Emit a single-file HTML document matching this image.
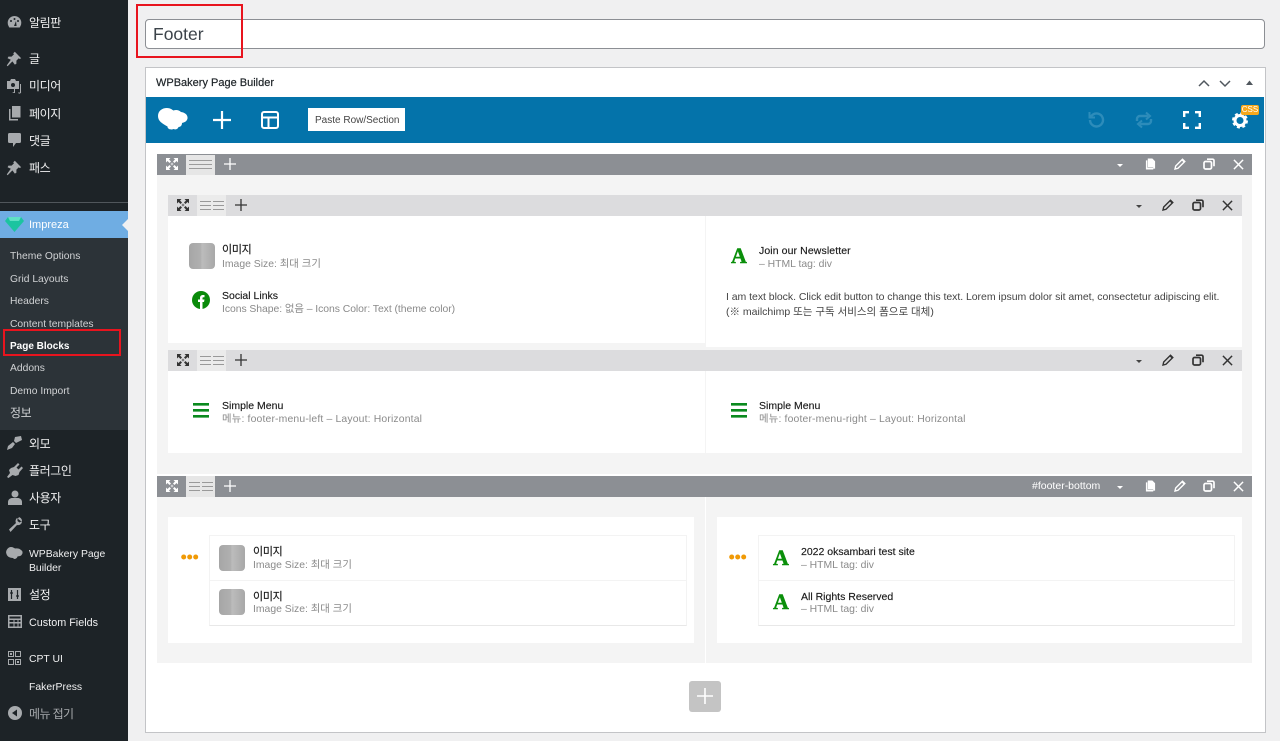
<!DOCTYPE html>
<html lang="ko"><head><meta charset="utf-8"><title>Footer</title>
<style>
html,body{margin:0;padding:0;width:1280px;height:741px;overflow:hidden;background:#f0f0f1}
body{position:relative;font-family:"Liberation Sans","Noto Sans CJK KR",sans-serif;font-size:11px;color:#23282d}
.a{position:absolute}
.t{position:absolute;white-space:nowrap;line-height:14px;margin-top:1px}
.m{color:#f0f0f1;font-size:11.5px}
.k{font-size:12px;letter-spacing:-.4px}
.s{color:#d0d2d4;font-size:10.3px;margin-top:2px}
.s.k{margin-top:1px}
.h{color:#1a1a1a;font-size:10.5px;-webkit-text-stroke:.15px #1a1a1a}
.g{color:#8a8a8a;font-size:10.4px;margin-top:2px}
svg{position:absolute;overflow:visible}
.img{position:absolute;width:26px;height:26px;border-radius:4px;background:linear-gradient(90deg,#a6a6a6,#b0b0b0 45%,#bcbcbc 50%,#a8a8a8)}
.A{position:absolute;font:bold 22px/26px "Liberation Serif",serif;color:#0a8f0a;-webkit-text-stroke:.5px #0a8f0a;width:24px;text-align:center}
</style></head><body>
<svg width="0" height="0" style="position:absolute">
<defs>
<symbol id="pin" viewBox="0 0 20 20"><path d="M11 1l8 8-2 1-1-1-3 3 0 4-2 1-3-4-6 6-1-1 5-7-4-2 1-2 4 0 3-3-1-1z" fill="#a7aaad"/></symbol>
<symbol id="exp" viewBox="0 0 12 12"><path d="M0 0h4.500L3 1.500 5 3.500 3.500 5 1.500 3 0 4.500zM12 0v4.500L10.500 3 8.500 5 7 3.500 9 1.500 7.500 0zM0 12V7.500L1.500 9l2-2L5 8.500l-2 2L4.500 12zM12 12H7.500L9 10.500l-2-2L8.500 7l2 2L12 7.500z" fill="currentColor"/><rect x="4.800" y="4.800" width="2.400" height="2.400" fill="currentColor" opacity=".55"/></symbol>
<symbol id="pen" viewBox="0 0 12 12"><path d="M1 11l.7-3L8.500 1.200 10.800 3.500 4 10.300z" fill="none" stroke="currentColor" stroke-width="1.400"/><path d="M7.500 2.200L10 4.700 11 3.500 8.700 1z" fill="currentColor"/></symbol>
<symbol id="clone" viewBox="0 0 12 12"><rect x="1" y="3.500" width="7.500" height="7.500" rx="1.500" fill="none" stroke="currentColor" stroke-width="1.700"/><path d="M4 1.200h5.500a1.500 1.500 0 0 1 1.500 1.500v5.500" fill="none" stroke="currentColor" stroke-width="1.700"/></symbol>
<symbol id="x" viewBox="0 0 12 12"><path d="M1 1l10 10M11 1L1 11" stroke="currentColor" stroke-width="1.600" fill="none"/></symbol>
<symbol id="plus" viewBox="0 0 12 12"><path d="M6 0v12M0 6h12" stroke="currentColor" stroke-width="1.300" fill="none"/></symbol>
<symbol id="copy" viewBox="0 0 12 12"><path d="M3 0h5l3 3v8H9v1H1V2h2z" fill="currentColor"/><path d="M3 2v8h6" fill="none" stroke="#8c8f94" stroke-width=".5"/></symbol>
<symbol id="ham" viewBox="0 0 16 15"><path d="M0 0h16v2.600H0zM0 6h16v2.600H0zM0 12h16v2.600H0z" fill="#0a8a1e"/></symbol>
</defs></svg>

<!-- Sidebar -->
<div class="a" style="left:0;top:0;width:128px;height:741px;background:#1d2327"></div>
<div class="a" style="left:0;top:202px;width:128px;height:1px;background:#50565b"></div>
<div class="a" style="left:0;top:211px;width:128px;height:27px;background:#6fade3"></div>
<div class="a" style="left:0;top:238px;width:128px;height:192px;background:#2c3338"></div>
<div class="a" style="left:122px;top:219px;width:0;height:0;border:6px solid transparent;border-left:0;border-right:6px solid #f0f0f1"></div>

<svg style="left:7px;top:15px" width="15" height="15" viewBox="0 0 15 15"><path d="M7.500 1a6.800 6.800 0 0 0-6 10l.8 1.500h10.400l.8-1.500a6.800 6.800 0 0 0-6-10z" fill="#a7aaad"/><circle cx="4" cy="6" r="1" fill="#1d2327"/><circle cx="7.500" cy="4" r="1" fill="#1d2327"/><circle cx="11" cy="6" r="1" fill="#1d2327"/><path d="M7 11l2-5 .6 5z" fill="#1d2327"/></svg>
<svg style="left:6px;top:51px" width="16" height="16"><use href="#pin"/></svg>
<svg style="left:6px;top:78px" width="17" height="16" viewBox="0 0 17 16"><path d="M1 3h3l1-2h4l1 2h3v8H1z" fill="#a7aaad"/><circle cx="7" cy="7" r="2" fill="#1d2327"/><path d="M15 6v7.500a1.500 1.500 0 0 1-3 1h2V6zM8 11v3l-2 1h3v-4z" fill="#a7aaad"/></svg>
<svg style="left:8px;top:106px" width="13" height="15" viewBox="0 0 13 15"><path d="M4 0h8.500v11.500H4z" fill="#a7aaad"/><path d="M1 3h1.500v10H10v1.500H1z" fill="#a7aaad"/></svg>
<svg style="left:8px;top:133px" width="13" height="14" viewBox="0 0 13 14"><path d="M1.500 0h10A1.500 1.500 0 0 1 13 1.500v7A1.500 1.500 0 0 1 11.500 10H8l-3 4v-4H1.500A1.500 1.500 0 0 1 0 8.500v-7A1.500 1.500 0 0 1 1.500 0z" fill="#a7aaad"/></svg>
<svg style="left:6px;top:160px" width="16" height="16"><use href="#pin"/></svg>
<svg style="left:5px;top:217px" width="19" height="15" viewBox="0 0 19 15"><path d="M3 0h13l3 4-9.500 11L0 4z" fill="#1cc4a0"/><path d="M3 0h13l-2 4H5z" fill="#5fe0c4"/></svg>
<svg style="left:6px;top:436px" width="17" height="15" viewBox="0 0 17 15"><path d="M9 1l6-1 1 4-6 3-2-2zM7 6l2 2-3 4-5 2 1-4z" fill="#a7aaad"/></svg>
<svg style="left:7px;top:463px" width="16" height="16" viewBox="0 0 16 16"><path d="M11 0l1.500 1.500-3 3 2 2 3-3L16 5l-3.500 4-1 3-3 1-3-1-4 3L0 14l3-4-1-3 2-2 3-1z" fill="#a7aaad"/></svg>
<svg style="left:8px;top:490px" width="14" height="15" viewBox="0 0 14 15"><circle cx="7" cy="4" r="3.500" fill="#a7aaad"/><path d="M0 15v-3c0-3 3-4 4-4h6c1 0 4 1 4 4v3z" fill="#a7aaad"/></svg>
<svg style="left:8px;top:517px" width="14" height="15" viewBox="0 0 14 15"><path d="M10 0a4 4 0 0 1 4 4l-2.500 1.500-2-1.500V2l1.500-1.500zM9 1a4 4 0 0 0-1 5L1 12.500 2.500 15 9 8a4 4 0 0 0 5-3z" fill="#a7aaad"/></svg>
<svg style="left:6px;top:547px" width="17" height="13" viewBox="0 0 17 13"><path d="M5 0c2 0 3 1 4 1.500C11 1 14 1.500 15 3c2 1 2 3.500.5 5-1 1.500-3 1-4 1.500-.5 2-3 3.500-4.500 1.500C4 11 1 9.500.5 7-1 4 2 0 5 0z" fill="#a7aaad"/></svg>
<svg style="left:8px;top:588px" width="13" height="13" viewBox="0 0 13 13"><rect width="13" height="13" fill="#a7aaad"/><path d="M3.500 2v9M9.500 2v9M2 5h3M8 8h3" stroke="#1d2327" stroke-width="1.200"/></svg>
<svg style="left:8px;top:615px" width="14" height="13" viewBox="0 0 14 13"><rect width="14" height="13" fill="#a7aaad"/><path d="M1.500 1.500h11v2h-11zM1.500 5h4v2h-4zM6.500 5h3v2h-3zM10.500 5h2v2h-2zM1.500 8.500h4v3h-4zM6.500 8.500h3v3h-3zM10.500 8.500h2v3h-2z" fill="#1d2327"/></svg>
<svg style="left:8px;top:651px" width="13" height="14" viewBox="0 0 13 14"><path d="M0 0h6v6H0zM7 0h6v6H7zM0 8h6v6H0zM7 8h6v6H7z" fill="#a7aaad"/><path d="M1 1h4v4H1zM8 1h4v4H8zM1 9h4v4H1zM8 9h4v4H8z" fill="#1d2327"/><path d="M2 2h2v2H2zM9 10h2v2H9z" fill="#a7aaad"/></svg>
<svg style="left:8px;top:706px" width="14" height="14" viewBox="0 0 14 14"><circle cx="7" cy="7" r="7" fill="#a7aaad"/><path d="M9 3.500v7L4 7z" fill="#1d2327"/></svg>

<div class="t m k" style="left:29px;top:15px">알림판</div>
<div class="t m k" style="left:29px;top:51px">글</div>
<div class="t m k" style="left:29px;top:78px">미디어</div>
<div class="t m k" style="left:29px;top:106px">페이지</div>
<div class="t m k" style="left:29px;top:133px">댓글</div>
<div class="t m k" style="left:29px;top:160px">패스</div>
<div class="t" style="left:29px;top:217px;color:#fff;font-size:11px">Impreza</div>
<div class="t s" style="left:10px;top:248px">Theme Options</div>
<div class="t s" style="left:10px;top:271px">Grid Layouts</div>
<div class="t s" style="left:10px;top:293px">Headers</div>
<div class="t s" style="left:10px;top:316px">Content templates</div>
<div class="t" style="left:10px;top:339px;color:#fff;font-size:10px;font-weight:bold">Page Blocks</div>
<div class="t s" style="left:10px;top:360px">Addons</div>
<div class="t s" style="left:10px;top:383px">Demo Import</div>
<div class="t s k" style="left:10px;top:405px;font-size:12px">정보</div>
<div class="t m k" style="left:29px;top:436px">외모</div>
<div class="t m k" style="left:29px;top:463px">플러그인</div>
<div class="t m k" style="left:29px;top:490px">사용자</div>
<div class="t m k" style="left:29px;top:517px">도구</div>
<div class="t m" style="left:29px;top:547px;font-size:10.400px">WPBakery Page</div>
<div class="t m" style="left:29px;top:561px;font-size:10.400px">Builder</div>
<div class="t m k" style="left:29px;top:587px">설정</div>
<div class="t m" style="left:29px;top:615px;font-size:10.800px">Custom Fields</div>
<div class="t m" style="left:29px;top:652px;font-size:10.400px">CPT UI</div>
<div class="t m" style="left:29px;top:680px;font-size:10.400px">FakerPress</div>
<div class="t k" style="left:29px;top:706px;color:#a7aaad;letter-spacing:-.6px">메뉴 접기</div>

<!-- Page Blocks highlight -->
<div class="a" style="left:3px;top:329px;width:114px;height:23px;border:2px solid #e8141e"></div>

<!-- Title -->
<div class="a" style="left:145px;top:19px;width:1118px;height:28px;background:#fff;border:1px solid #8c8f94;border-radius:4px"></div>
<div class="t" style="left:153px;top:23px;font-size:17.500px;line-height:21px;color:#3c434a">Footer</div>
<div class="a" style="left:136px;top:4px;width:103px;height:50px;border:2px solid #e8141e"></div>

<!-- Panel -->
<div class="a" style="left:145px;top:67px;width:1119px;height:664px;background:#fff;border:1px solid #c3c4c7"></div>
<div class="t" style="left:156px;top:75px;font-size:11px;color:#1d2327;-webkit-text-stroke:.2px #1d2327">WPBakery Page Builder</div>
<svg style="left:1199px;top:78px" width="60" height="9" fill="none" stroke="#50575e" stroke-width="1.500"><path d="M0 8l5-5 5 5M21 3l5 5 5-5"/><path d="M47 7l3.500-4.500L54 7z" fill="#50575e" stroke="none"/></svg>

<!-- Blue bar -->
<div class="a" style="left:146px;top:97px;width:1118px;height:46px;background:#0473aa"></div>
<svg style="left:158px;top:108px" width="30" height="23" viewBox="0 0 30 23"><path d="M9 0c3 0 5 1.500 6.500 2.500C18 1.500 21 2 23 4c4 .5 7 3 6.500 6.500-.5 3-3.500 4-5.500 4.500 0 2-1 4-3.500 4-.5 2-3 3-5 2-2 1-6 .5-6-2.500C4 15.500 0 13 0 8 0 3 4 0 9 0z" fill="#fff"/></svg>
<svg style="left:213px;top:111px;color:#fff" width="18" height="18" viewBox="0 0 18 18"><path d="M9 0v18M0 9h18" stroke="#fff" stroke-width="2.200"/></svg>
<svg style="left:261px;top:111px" width="18" height="18" viewBox="0 0 18 18" fill="none" stroke="#fff" stroke-width="2"><rect x="1" y="1" width="16" height="16" rx="2"/><path d="M1 6.500h16M7.500 6.500V17"/></svg>
<div class="a" style="left:308px;top:108px;width:97px;height:23px;background:#fff"></div>
<div class="t" style="left:315px;top:113px;font-size:10px;color:#444">Paste Row/Section</div>
<svg style="left:1087px;top:111px" width="18" height="18" viewBox="0 0 18 18" fill="none" stroke="#2d8cba" stroke-width="2.400"><path d="M3 9a6.500 6.500 0 1 0 3-5.500L3 6"/><path d="M2.500 1v5.500H8" stroke-width="2"/></svg>
<svg style="left:1135px;top:111px" width="18" height="18" viewBox="0 0 18 18" fill="none" stroke="#2d8cba" stroke-width="2.400"><path d="M2 10V8a3 3 0 0 1 3-3h8M16 8v2a3 3 0 0 1-3 3H5"/><path d="M11 1.500L15 5l-4 3.500M7 9.500L3 13l4 3.500" stroke-width="2"/></svg>
<svg style="left:1183px;top:111px" width="18" height="18" viewBox="0 0 18 18" fill="none" stroke="#fff" stroke-width="2.400"><path d="M1.200 6V1.200H6M12 1.200h4.800V6M16.800 12v4.800H12M6 16.800H1.200V12"/></svg>
<svg style="left:1232px;top:112px" width="16" height="17" viewBox="0 0 16 17"><circle cx="8" cy="8.500" r="5" fill="none" stroke="#fff" stroke-width="3"/><circle cx="8" cy="8.500" r="7" fill="none" stroke="#fff" stroke-width="2" stroke-dasharray="3 2.500"/></svg>
<div class="a" style="left:1241px;top:105px;width:18px;height:10px;background:#f6a81c;border-radius:2px;color:#fff;font-size:8px;line-height:10px;text-align:center">CSS</div>

<!-- Row 1 -->
<div class="a" style="left:157px;top:154px;width:1095px;height:21px;background:#8c8f94"></div>
<div class="a" style="left:157px;top:175px;width:1095px;height:299px;background:#f4f4f4"></div>
<div class="a" style="left:186px;top:155px;width:29px;height:20px;background:#e6e6e6"></div>
<svg style="left:166px;top:158px;color:#fff" width="12" height="12"><use href="#exp"/></svg>
<svg style="left:189px;top:160px" width="23" height="9"><path d="M0 .5h23M0 4.500h23M0 8.500h23" stroke="#9b9b9b" stroke-width="1"/></svg>
<svg style="left:224px;top:158px;color:#fff" width="12" height="12"><use href="#plus"/></svg>
<div class="a" style="left:1117px;top:164px;border:3px solid transparent;border-top:3px solid #fff;border-left-width:3.500px;border-right-width:3.500px"></div>
<svg style="left:1145px;top:158px;color:#fff" width="11" height="12"><use href="#copy"/></svg>
<svg style="left:1174px;top:158px;color:#fff" width="12" height="12"><use href="#pen"/></svg>
<svg style="left:1203px;top:158px;color:#fff" width="12" height="12"><use href="#clone"/></svg>
<svg style="left:1233px;top:159px;color:#fff" width="11" height="11"><use href="#x"/></svg>

<!-- Inner row 1 -->
<div class="a" style="left:168px;top:195px;width:1074px;height:21px;background:#dcdcde"></div>
<div class="a" style="left:197px;top:195px;width:29px;height:21px;background:#ebebeb"></div>
<div class="a" style="left:168px;top:216px;width:537px;height:127px;background:#fff"></div>
<div class="a" style="left:706px;top:216px;width:536px;height:131px;background:#fff"></div>
<svg style="left:177px;top:199px;color:#333" width="12" height="12"><use href="#exp"/></svg>
<svg style="left:200px;top:201px" width="24" height="9"><path d="M0 .5h11M13 .5h11M0 4.500h11M13 4.500h11M0 8.500h11M13 8.500h11" stroke="#999"/></svg>
<svg style="left:235px;top:199px;color:#333" width="12" height="12"><use href="#plus"/></svg>
<div class="a" style="left:1136px;top:205px;border:3px solid transparent;border-top:3px solid #444;border-left-width:3.500px;border-right-width:3.500px"></div>
<svg style="left:1162px;top:199px;color:#333" width="12" height="12"><use href="#pen"/></svg>
<svg style="left:1192px;top:199px;color:#333" width="12" height="12"><use href="#clone"/></svg>
<svg style="left:1222px;top:200px;color:#333" width="11" height="11"><use href="#x"/></svg>

<div class="img" style="left:189px;top:243px"></div>
<div class="t h k" style="left:222px;top:242px;font-size:11px;letter-spacing:-.3px">이미지</div>
<div class="t g" style="left:222px;top:256px">Image Size: 최대 크기</div>
<svg style="left:192px;top:291px" width="18" height="18" viewBox="0 0 18 18"><circle cx="9" cy="9" r="9" fill="#0a8a0a"/><path d="M8 18v-7H6V8.500h2V7c0-2 1.200-3 3-3h1.500v2.300H11.500c-.8 0-1 .4-1 1v1.200h2L12 11h-1.500v7z" fill="#fff"/></svg>
<div class="t h" style="left:222px;top:288px">Social Links</div>
<div class="t g" style="left:222px;top:301px;letter-spacing:-.05px">Icons Shape: 없음 – Icons Color: Text (theme color)</div>

<div class="A" style="left:727px;top:243px">A</div>
<div class="t h" style="left:759px;top:243px;letter-spacing:.1px">Join our Newsletter</div>
<div class="t g" style="left:759px;top:256px">– HTML tag: div</div>
<div class="t" style="left:726px;top:289px;font-size:10.500px;color:#444;letter-spacing:-.04px">I am text block. Click edit button to change this text. Lorem ipsum dolor sit amet, consectetur adipiscing elit.</div>
<div class="t" style="left:726px;top:304px;font-size:10.500px;color:#444">(※ mailchimp 또는 구독 서비스의 폼으로 대체)</div>

<!-- Inner row 2 -->
<div class="a" style="left:168px;top:350px;width:1074px;height:21px;background:#dcdcde"></div>
<div class="a" style="left:197px;top:350px;width:29px;height:21px;background:#ebebeb"></div>
<div class="a" style="left:168px;top:371px;width:537px;height:82px;background:#fff"></div>
<div class="a" style="left:706px;top:371px;width:536px;height:82px;background:#fff"></div>
<svg style="left:177px;top:354px;color:#333" width="12" height="12"><use href="#exp"/></svg>
<svg style="left:200px;top:356px" width="24" height="9"><path d="M0 .5h11M13 .5h11M0 4.500h11M13 4.500h11M0 8.500h11M13 8.500h11" stroke="#999"/></svg>
<svg style="left:235px;top:354px;color:#333" width="12" height="12"><use href="#plus"/></svg>
<div class="a" style="left:1136px;top:360px;border:3px solid transparent;border-top:3px solid #444;border-left-width:3.500px;border-right-width:3.500px"></div>
<svg style="left:1162px;top:354px;color:#333" width="12" height="12"><use href="#pen"/></svg>
<svg style="left:1192px;top:354px;color:#333" width="12" height="12"><use href="#clone"/></svg>
<svg style="left:1222px;top:355px;color:#333" width="11" height="11"><use href="#x"/></svg>

<svg style="left:193px;top:403px" width="16" height="15"><use href="#ham"/></svg>
<div class="t h" style="left:222px;top:398px">Simple Menu</div>
<div class="t g" style="left:222px;top:411px;letter-spacing:.16px">메뉴: footer-menu-left – Layout: Horizontal</div>
<svg style="left:731px;top:403px" width="16" height="15"><use href="#ham"/></svg>
<div class="t h" style="left:759px;top:398px">Simple Menu</div>
<div class="t g" style="left:759px;top:411px;letter-spacing:.16px">메뉴: footer-menu-right – Layout: Horizontal</div>

<!-- Row 2 -->
<div class="a" style="left:157px;top:476px;width:1095px;height:21px;background:#8c8f94"></div>
<div class="a" style="left:157px;top:497px;width:1095px;height:166px;background:#f4f4f4"></div>
<div class="a" style="left:705px;top:497px;width:1px;height:166px;background:#fff"></div>
<div class="a" style="left:186px;top:476px;width:29px;height:21px;background:#e6e6e6"></div>
<svg style="left:166px;top:480px;color:#fff" width="12" height="12"><use href="#exp"/></svg>
<svg style="left:189px;top:482px" width="24" height="9"><path d="M0 .5h11M13 .5h11M0 4.500h11M13 4.500h11M0 8.500h11M13 8.500h11" stroke="#999"/></svg>
<svg style="left:224px;top:480px;color:#fff" width="12" height="12"><use href="#plus"/></svg>
<div class="t" style="left:1032px;top:478px;font-size:10.500px;color:#fff">#footer-bottom</div>
<div class="a" style="left:1117px;top:486px;border:3px solid transparent;border-top:3px solid #fff;border-left-width:3.500px;border-right-width:3.500px"></div>
<svg style="left:1145px;top:480px;color:#fff" width="11" height="12"><use href="#copy"/></svg>
<svg style="left:1174px;top:480px;color:#fff" width="12" height="12"><use href="#pen"/></svg>
<svg style="left:1203px;top:480px;color:#fff" width="12" height="12"><use href="#clone"/></svg>
<svg style="left:1233px;top:481px;color:#fff" width="11" height="11"><use href="#x"/></svg>

<div class="a" style="left:168px;top:517px;width:526px;height:126px;background:#fff"></div>
<div class="a" style="left:717px;top:517px;width:525px;height:126px;background:#fff"></div>

<svg style="left:181px;top:554px" width="18" height="6"><circle cx="2.700" cy="3" r="2.500" fill="#f09a06"/><circle cx="8.700" cy="3" r="2.500" fill="#f09a06"/><circle cx="14.700" cy="3" r="2.500" fill="#f09a06"/></svg>
<svg style="left:729px;top:554px" width="18" height="6"><circle cx="2.700" cy="3" r="2.500" fill="#f09a06"/><circle cx="8.700" cy="3" r="2.500" fill="#f09a06"/><circle cx="14.700" cy="3" r="2.500" fill="#f09a06"/></svg>

<div class="a" style="left:209px;top:535px;width:476px;height:44px;border:1px solid #f3f3f3;border-bottom:1px solid #f0f0f0"></div>
<div class="a" style="left:209px;top:580px;width:476px;height:44px;border:1px solid #f3f3f3;border-bottom:1px solid #e8e8e8"></div>
<div class="a" style="left:758px;top:535px;width:475px;height:44px;border:1px solid #f3f3f3;border-bottom:1px solid #f0f0f0"></div>
<div class="a" style="left:758px;top:580px;width:475px;height:44px;border:1px solid #f3f3f3;border-bottom:1px solid #e8e8e8"></div>

<div class="img" style="left:219px;top:545px"></div>
<div class="t h k" style="left:253px;top:544px;font-size:11px;letter-spacing:-.3px">이미지</div>
<div class="t g" style="left:253px;top:557px">Image Size: 최대 크기</div>
<div class="img" style="left:219px;top:589px"></div>
<div class="t h k" style="left:253px;top:589px;font-size:11px;letter-spacing:-.3px">이미지</div>
<div class="t g" style="left:253px;top:601px">Image Size: 최대 크기</div>

<div class="A" style="left:769px;top:545px">A</div>
<div class="t h" style="left:801px;top:544px">2022 oksambari test site</div>
<div class="t g" style="left:801px;top:557px">– HTML tag: div</div>
<div class="A" style="left:769px;top:589px">A</div>
<div class="t h" style="left:801px;top:589px">All Rights Reserved</div>
<div class="t g" style="left:801px;top:601px">– HTML tag: div</div>

<!-- Add -->
<div class="a" style="left:689px;top:681px;width:32px;height:31px;background:#c4c4c4;border-radius:3px"></div>
<svg style="left:697px;top:688px" width="16" height="16"><path d="M8 0v16M0 8h16" stroke="#fff" stroke-width="1.600"/></svg>
</body></html>
